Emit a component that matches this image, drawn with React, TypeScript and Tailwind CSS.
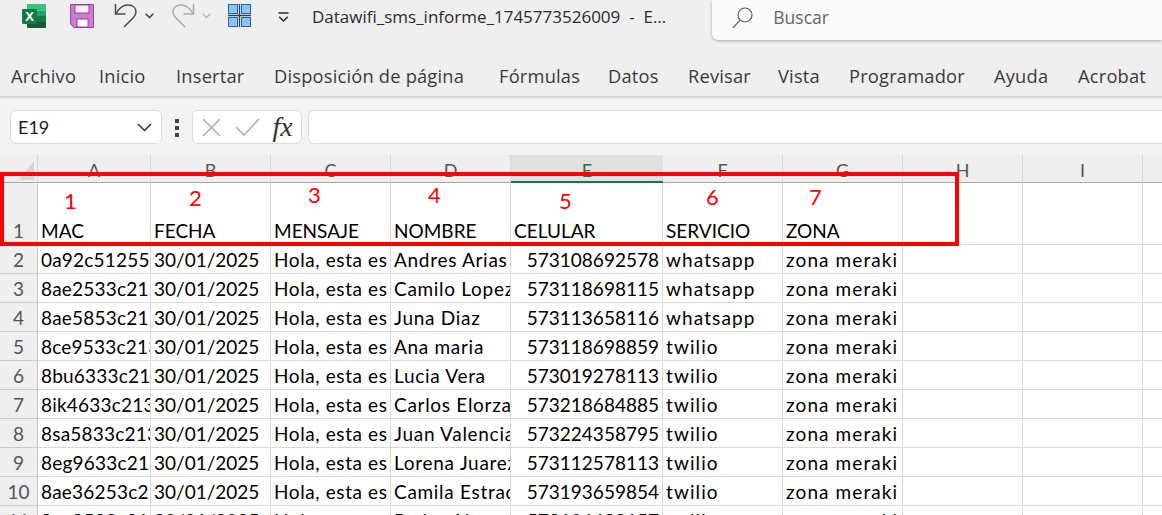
const tabs = ["Archivo","Inicio","Insertar","Disposición de página","Fórmulas","Datos","Revisar","Vista","Programador","Ayuda","Acrobat"];
const letters = ["A","B","C","D","E","F","G","H","I","J"];
const rows = [
  ["2","0a92c51255","Andres Arias","573108692578","whatsapp"],
  ["3","8ae2533c21","Camilo Lopez","573118698115","whatsapp"],
  ["4","8ae5853c21","Juna Diaz","573113658116","whatsapp"],
  ["5","8ce9533c213","Ana maria","573118698859","twilio"],
  ["6","8bu6333c21","Lucia Vera","573019278113","twilio"],
  ["7","8ik4633c213","Carlos Elorza","573218684885","twilio"],
  ["8","8sa5833c213","Juan Valencia","573224358795","twilio"],
  ["9","8eg9633c213","Lorena Juarez","573112578113","twilio"],
  ["10","8ae36253c2","Camila Estrada","573193659854","twilio"],
  ["11","8ae8533c21","Pedro Alvarez","573106698157","twilio"],
];
const gridCols = "grid grid-cols-[38px_113px_120px_120px_120px_152px_120px_120px_120px_120px_120px]";
const sheetFont = "font-['Lato','Liberation_Sans',sans-serif] text-[19px] text-black";

function ExcelLogo() {
  return (
    <svg width="24" height="24" viewBox="0 0 24 24">
      <path d="M5 0h18a1 1 0 0 1 1 1v5.5H5z" fill="#33c481" />
      <rect x="5" y="6.5" width="19" height="5.5" fill="#21a366" />
      <rect x="5" y="12" width="19" height="6" fill="#107c41" />
      <path d="M5 18h19v5a1 1 0 0 1-1 1H6a1 1 0 0 1-1-1z" fill="#185c37" />
      <rect x="0" y="5" width="15" height="15" rx="1.2" fill="#107c41" />
      <text x="7.5" y="17" textAnchor="middle" fontSize="13" fontWeight="700" fill="#fff" fontFamily="Liberation Sans">X</text>
    </svg>
  );
}
function SaveIcon() {
  return (
    <svg width="24" height="24" viewBox="0 0 24 24">
      <path d="M0.5 0.5h23v23H4L0.5 20z" fill="#c77fd0" stroke="#a03aa8" strokeWidth="1" />
      <rect x="5" y="1" width="14" height="8" fill="#f7eef8" stroke="#a03aa8" />
      <rect x="7" y="15" width="11" height="8" fill="#ffffff" stroke="#a03aa8" />
    </svg>
  );
}
function UndoIcon({ color }: { color: string }) {
  return (
    <svg width="24" height="25" viewBox="0 0 24 25" fill="none" stroke={color} strokeWidth="1.5">
      <path d="M1.5 1v10h10" />
      <path d="M2 10.5C6 3.5 10 2 14 2c5 0 8 3 8 7 0 3-1.5 4.5-3 6l-9 9" />
    </svg>
  );
}
function RedoIcon({ color }: { color: string }) {
  return (
    <svg width="24" height="25" viewBox="0 0 24 25" fill="none" stroke={color} strokeWidth="1.5">
      <path d="M22.5 1v10h-10" />
      <path d="M22 10.5C18 3.5 14 2 10 2 5 2 2 5 2 9c0 3 1.5 4.5 3 6l9 9" />
    </svg>
  );
}
function Chevron({ color }: { color: string }) {
  return (
    <svg width="9" height="6" viewBox="0 0 9 6" fill="none" stroke={color} strokeWidth="1.4">
      <path d="M0.7 0.8 4.5 4.6 8.3 0.8" />
    </svg>
  );
}
function GridIcon() {
  return (
    <svg width="23" height="23" viewBox="0 0 23 23">
      <rect x="0.5" y="0.5" width="9" height="9" fill="#8fc2ec" stroke="#1769b8" />
      <rect x="13.5" y="0.5" width="9" height="9" fill="#8fc2ec" stroke="#1769b8" />
      <rect x="0.5" y="13.5" width="9" height="9" fill="#8fc2ec" stroke="#1769b8" />
      <rect x="13.5" y="13.5" width="9" height="9" fill="#8fc2ec" stroke="#1769b8" />
      <path d="M11.5 0v23M0 11.5h23" stroke="#3c3c3c" strokeWidth="1.3" />
    </svg>
  );
}
function CustomizeIcon() {
  return (
    <svg width="11" height="11" viewBox="0 0 11 11" fill="none" stroke="#2b2b2b" strokeWidth="1.5">
      <path d="M0.5 1h10" />
      <path d="M1.2 4.8 5.5 9l4.3-4.2" />
    </svg>
  );
}
function SearchIcon() {
  return (
    <svg width="21" height="22" viewBox="0 0 21 22" fill="none" stroke="#5f5f5f" strokeWidth="1.2">
      <circle cx="13" cy="8" r="7" />
      <path d="M8.2 13 1 20.8" />
    </svg>
  );
}

function Cell({ children, right, className = "" }: { children?: React.ReactNode; right?: boolean; className?: string }) {
  return (
    <div className={`flex items-end overflow-hidden whitespace-nowrap border-r border-b border-[#d9d9d9] bg-white px-[3px] pb-[1px] leading-[25px] ${right ? "justify-end" : "justify-start"} ${className}`}>
      {children}
    </div>
  );
}

export default function App() {
  return (
    <div className="relative h-[515px] w-[1162px] overflow-hidden bg-white font-['Open_Sans','Noto_Sans',sans-serif]">
      <div className="h-[96px] bg-[#efefef]">
        <div className="flex h-[47px] items-start">
          <div className="ml-[22px] mt-[4px]"><ExcelLogo /></div>
          <div className="ml-[24px] mt-[4px]"><SaveIcon /></div>
          <div className="ml-[20px] mt-[3px]"><UndoIcon color="#4a4a4a" /></div>
          <div className="ml-[7px] mt-[13px]"><Chevron color="#333" /></div>
          <div className="ml-[17px] mt-[3px]"><RedoIcon color="#a9a9a9" /></div>
          <div className="ml-[7px] mt-[13px]"><Chevron color="#b5b5b5" /></div>
          <div className="ml-[17px] mt-[4px]"><GridIcon /></div>
          <div className="ml-[27px] mt-[12px]"><CustomizeIcon /></div>
          <div className="ml-[23px] mt-[5px] whitespace-pre text-[17px] leading-[24px] text-[#2b2b2b]">Datawifi_sms_informe_1745773526009  -  E...</div>
          <div className="ml-[46px] flex h-[40px] flex-1 items-center rounded-bl-[6px] bg-[#fafafa] pb-[5px] pl-[20px] shadow-[0_1px_3px_rgba(0,0,0,0.3)]">
            <SearchIcon />
            <span className="ml-[20px] text-[17.5px] text-[#666666]">Buscar</span>
          </div>
        </div>
        <nav className="grid h-[49px] grid-cols-[88px_77px_98px_225px_109px_80px_90px_71px_145px_84px_auto] items-start pl-[11px] pt-[17px] text-[18.3px] leading-[24px] tracking-[0.2px] whitespace-nowrap text-[#3a3a3a]">
          {tabs.map((t) => <span key={t}>{t}</span>)}
        </nav>
      </div>
      <div className="h-[3px] bg-gradient-to-b from-[#cfcfcf] to-[#ececec]" />
      <div className="flex h-[56px] items-start bg-[#f3f3f3] pt-[11px]">
        <div className="ml-[10px] flex h-[34px] w-[152px] items-center justify-between rounded-[6px] border border-[#dcdcdc] bg-white pl-[7px] pr-[9px] text-[17px] text-[#222]">
          <span className="font-['Lato',sans-serif] text-[18px]">E19</span>
          <svg width="15" height="9" viewBox="0 0 15 9" fill="none" stroke="#333" strokeWidth="1.5"><path d="M1 1l6.5 6.5L14 1" /></svg>
        </div>
        <div className="ml-[13px] mt-[9px] flex flex-col gap-[3.5px]">
          <span className="size-[3.5px] bg-[#444]" />
          <span className="size-[3.5px] bg-[#444]" />
          <span className="size-[3.5px] bg-[#444]" />
        </div>
        <div className="ml-[13px] flex h-[34px] w-[110px] items-center rounded-[6px] border border-[#dcdcdc] bg-white pl-[9px]">
          <svg width="20" height="19" viewBox="0 0 20 19" fill="none" stroke="#b3b3b3" strokeWidth="1.7"><path d="M1 1l17 17M18 1 1 18" /></svg>
          <svg className="ml-[13px]" width="25" height="19" viewBox="0 0 25 19" fill="none" stroke="#b3b3b3" strokeWidth="1.7"><path d="M1 9l8 8L24 1" /></svg>
          <span className="ml-[13px] font-['Liberation_Serif',serif] text-[28px] leading-none text-[#333] italic">fx</span>
        </div>
        <div className="ml-[6px] h-[34px] flex-1 rounded-l-[6px] border border-r-0 border-[#dcdcdc] bg-white" />
      </div>
      <div className={sheetFont}>
        <div className={`${gridCols} h-[28px] border-b border-[#a6a6a6] bg-[#efefef] text-[18px] leading-[28px] text-[#555]`}>
          <div className="relative border-r border-[#d4d4d4]">
            <div className="absolute right-[3px] bottom-[4px] size-0 border-b-[19px] border-l-[15px] border-b-[#d6d6d6] border-l-transparent" />
          </div>
          {letters.map((l) => (
            <div key={l} className={`pt-[1px] text-center ${l === "E" ? "h-[28px] border-b-2 border-[#217346] bg-[#e0e0e0] text-[#217346]" : "border-r border-[#d9d9d9]"}`}>{l}</div>
          ))}
        </div>
        <div className={`${gridCols} h-[62px]`}>
          <div className="flex items-end justify-center border-r border-b border-[#c8c8c8] bg-[#efefef] text-[#555] pb-[1px] leading-[25px]">1</div>
          <Cell>MAC</Cell>
          <Cell>FECHA</Cell>
          <Cell>MENSAJE</Cell>
          <Cell>NOMBRE</Cell>
          <Cell>CELULAR</Cell>
          <Cell>SERVICIO</Cell>
          <Cell>ZONA</Cell>
          <Cell /><Cell /><Cell />
        </div>
        {rows.map(([n, mac, name, tel, svc]) => (
          <div key={n} className={`${gridCols} h-[29px]`}>
            <div className="flex items-end justify-center border-r border-b border-[#c8c8c8] bg-[#efefef] text-[#555] pb-[1px] leading-[25px]">{n}</div>
            <Cell className="tracking-[0.2px]">{mac}</Cell>
            <Cell>30/01/2025</Cell>
            <Cell className="tracking-[0.6px]">Hola, esta es</Cell>
            <Cell className="tracking-[0.7px]">{name}</Cell>
            <Cell right>{tel}</Cell>
            <Cell className="tracking-[1.1px]">{svc}</Cell>
            <Cell className="tracking-[1.1px]">zona meraki</Cell>
            <Cell /><Cell /><Cell />
          </div>
        ))}
      </div>
      <div className="absolute top-[172px] left-0 h-[74px] w-[959px] border-4 border-[#ff0000]" />
      <div className="font-['Lato',sans-serif] text-[22px] leading-none text-[#ff0000]">
        <span className="absolute top-[190px] left-[64px]">1</span>
        <span className="absolute top-[187px] left-[189px]">2</span>
        <span className="absolute top-[184px] left-[308px]">3</span>
        <span className="absolute top-[184px] left-[428px]">4</span>
        <span className="absolute top-[190px] left-[559px]">5</span>
        <span className="absolute top-[186px] left-[706px]">6</span>
        <span className="absolute top-[186px] left-[809px]">7</span>
      </div>
    </div>
  );
}
